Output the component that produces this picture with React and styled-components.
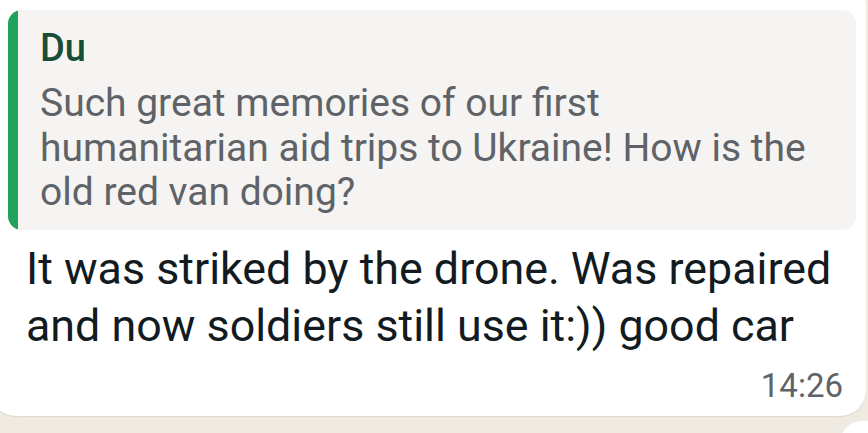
import React from "react";
import styled, { createGlobalStyle } from "styled-components";

const GlobalStyle = createGlobalStyle`
  html, body {
    margin: 0;
    padding: 0;
    background: #efeae2;
    overflow: hidden;
  }
  body {
    font-family: Roboto, "Noto Sans", sans-serif;
  }
`;

const Page = styled.div`
  width: 868px;
  height: 433px;
  position: relative;
  overflow: hidden;
  background: #efeae2;
`;

const Bubble = styled.div`
  margin: -20px 2px 0 -10px;
  padding: 30px 10px 12px 18px;
  background: #ffffff;
  border-radius: 0 26px 26px 26px;
  box-shadow: 0 1px 1px rgba(0, 0, 0, 0.08);
  position: relative;
  z-index: 1;
`;

const Quote = styled.div`
  display: flex;
  background: #f5f4f2;
  border-radius: 14px;
  overflow: hidden;
`;

const QuoteBar = styled.div`
  width: 10px;
  flex-shrink: 0;
  background: #20a25a;
`;

const QuoteBody = styled.div`
  padding: 16px 20px 15px 22px;
`;

const Author = styled.div`
  color: #1a4d36;
  font-size: 38px;
  font-weight: 500;
  line-height: 44px;
  margin-bottom: 11px;
`;

const QuoteText = styled.div`
  color: #5f6368;
  font-size: 39px;
  line-height: 44.5px;
  white-space: nowrap;
`;

const Message = styled.div`
  color: #111b21;
  font-size: 44.8px;
  line-height: 57px;
  padding: 10px 10px 0 18px;
  white-space: nowrap;
`;

const Meta = styled.div`
  display: flex;
  justify-content: flex-end;
  padding: 14px 13px 0 0;
`;

const Time = styled.span`
  color: #5f6368;
  font-size: 33px;
  line-height: 36px;
`;

const NextBubble = styled.div`
  margin: 5px 0 0 840px;
  height: 40px;
  background: #ffffff;
  border-radius: 22px 0 0 0;
`;

export default function App() {
  return (
    <Page>
      <GlobalStyle />
      <Bubble>
        <Quote>
          <QuoteBar />
          <QuoteBody>
            <Author>Du</Author>
            <QuoteText>
              Such great memories of our first
              <br />
              humanitarian aid trips to Ukraine! How is the
              <br />
              old red van doing?
            </QuoteText>
          </QuoteBody>
        </Quote>
        <Message>
          It was striked by the drone. Was repaired
          <br />
          and now soldiers still use it:)) good car
        </Message>
        <Meta>
          <Time>14:26</Time>
        </Meta>
      </Bubble>
      <NextBubble />
    </Page>
  );
}
